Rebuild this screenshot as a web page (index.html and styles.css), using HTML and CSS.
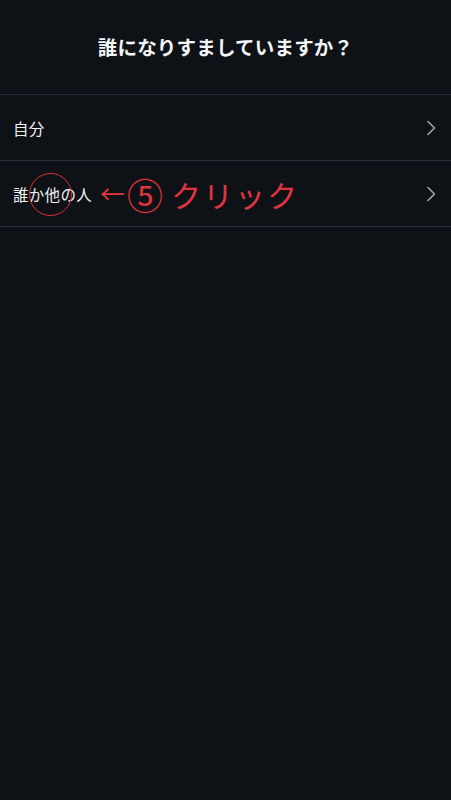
FILE: index.html
```html
<!DOCTYPE html>
<html lang="ja">
<head>
<meta charset="utf-8">
<title>誰になりすましていますか？</title>
<link rel="stylesheet" href="styles.css">
</head>
<body>
<div class="screen">
  <header class="header">
    <h1 class="title">誰になりすましていますか？</h1>
  </header>
  <ul class="list">
    <li class="row">
      <span class="label">自分</span>
      <svg class="chevron" width="12" height="16" viewBox="0 0 12 16"><path d="M3 1.5 L9.5 8 L3 14.5" fill="none" stroke="#a3a6ab" stroke-width="1.6" stroke-linecap="round" stroke-linejoin="round"/></svg>
    </li>
    <li class="row">
      <span class="label">誰か他の人</span>
      <span class="note"><span class="arrow">←</span><span class="num">⑤</span><span class="click">クリック</span></span>
      <span class="ring"></span>
      <svg class="chevron" width="12" height="16" viewBox="0 0 12 16"><path d="M3 1.5 L9.5 8 L3 14.5" fill="none" stroke="#a3a6ab" stroke-width="1.6" stroke-linecap="round" stroke-linejoin="round"/></svg>
    </li>
  </ul>
</div>
</body>
</html>
```
FILE: styles.css
```css
html, body {
  margin: 0;
  padding: 0;
  background: #0e1116;
}
body {
  font-family: "Noto Sans CJK JP", "Noto Sans", sans-serif;
  color: #f2f3f5;
}
.screen {
  width: 451px;
  min-height: 800px;
  background: #0e1116;
}
.header {
  height: 95px;
  display: flex;
  align-items: center;
  justify-content: center;
  border-bottom: 1px solid #2c2f35;
  box-sizing: border-box;
}
.title {
  margin: 0 0 2px 0;
  font-size: 19.5px;
  font-weight: 700;
  letter-spacing: 0.2px;
  color: #f4f5f7;
}
.list {
  list-style: none;
  margin: 0;
  padding: 0;
}
.row {
  position: relative;
  height: 66px;
  display: flex;
  align-items: center;
  padding: 0 14px 0 13px;
  border-bottom: 1px solid #2c2f35;
  box-sizing: border-box;
}
.label {
  font-size: 15.5px;
  letter-spacing: 0.3px;
  color: #eef0f2;
}
.note {
  display: flex;
  align-items: center;
  margin-left: 8px;
  color: #e0353d;
  line-height: 1;
}
.arrow {
  font-size: 25px;
}
.num {
  margin-left: 2px;
  font-size: 36px;
}
.click {
  margin-left: 8px;
  font-size: 30px;
  letter-spacing: 2px;
}
.ring {
  position: absolute;
  left: 29px;
  top: 12px;
  width: 41px;
  height: 41px;
  border: 1.5px solid #d8323a;
  border-radius: 50%;
}
.chevron {
  margin-left: auto;
}
```
